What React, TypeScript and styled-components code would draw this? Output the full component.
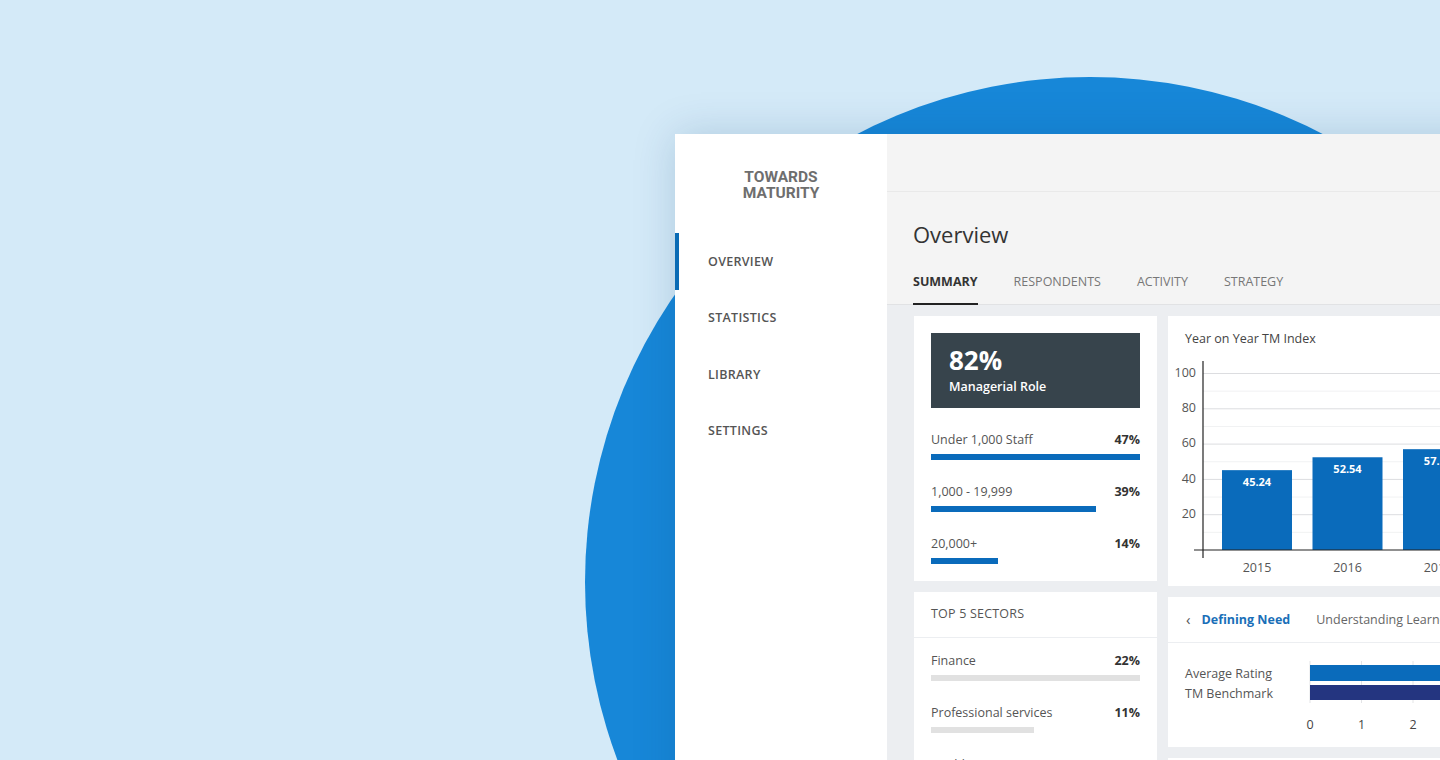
import styled, {createGlobalStyle} from "styled-components";

const GlobalStyle = createGlobalStyle`
    * { box-sizing: border-box; }
    html, body { margin: 0; padding: 0; }
    body {
        font-family: "Open Sans", "Liberation Sans", sans-serif;
        background: #d4eaf8;
    }
`

const blue = "#0a6bbb"
const navy = "#243580"

type BarRow = { label: string, value: string, width: number }

const staffRows: BarRow[] = [
    {label: "Under 1,000 Staff", value: "47%", width: 209},
    {label: "1,000 - 19,999", value: "39%", width: 165},
    {label: "20,000+", value: "14%", width: 67},
]

const sectorRows: BarRow[] = [
    {label: "Finance", value: "22%", width: 209},
    {label: "Professional services", value: "11%", width: 103},
    {label: "Healthcare", value: "9%", width: 86},
]

const navItems = ["OVERVIEW", "STATISTICS", "LIBRARY", "SETTINGS"]
const tabs = ["SUMMARY", "RESPONDENTS", "ACTIVITY", "STRATEGY"]

const years = [
    {year: "2015", value: 45.24},
    {year: "2016", value: 52.54},
    {year: "2017", value: 57.12},
    {year: "2018", value: 61.08},
]

const IndexChart = () => {
    const base = 194
    const k = 1.765
    const y = (v: number) => base - v * k
    return (
        <svg width="420" height="225" viewBox="0 0 420 225">
            {[10, 30, 50, 70, 90].map(v => (
                <line key={v} x1={35} x2={420} y1={y(v)} y2={y(v)} stroke="#f1f2f3" strokeWidth={1}/>
            ))}
            {[20, 40, 60, 80, 100].map(v => (
                <g key={v}>
                    <line x1={35} x2={420} y1={y(v)} y2={y(v)} stroke="#dcdde0" strokeWidth={1}/>
                    <text x={28} y={y(v)} dominantBaseline="middle" textAnchor="end"
                          fontFamily="Open Sans, sans-serif" fontSize="12.5" fill="#555">{v}</text>
                </g>
            ))}
            {years.map((d, i) => {
                const x = 54 + i * 90.5
                return (
                    <g key={d.year}>
                        <rect x={x} y={y(d.value)} width={70} height={d.value * k} fill={blue}/>
                        <text x={x + 35} y={y(d.value) + 13} dominantBaseline="middle" textAnchor="middle"
                              fontFamily="Open Sans, sans-serif" fontSize="11" fontWeight="700" fill="#fff">
                            {d.value.toFixed(2)}
                        </text>
                        <text x={x + 35} y={213} dominantBaseline="middle" textAnchor="middle"
                              fontFamily="Open Sans, sans-serif" fontSize="12.5" fill="#555">{d.year}</text>
                    </g>
                )
            })}
            <line x1={35} x2={35} y1={5} y2={202} stroke="#222" strokeWidth={1.2}/>
            <line x1={26} x2={420} y1={base} y2={base} stroke="#222" strokeWidth={1.2}/>
        </svg>
    )
}

const RatingChart = () => {
    const step = 51.5
    return (
        <RatingSvg width="280" height="80" viewBox="0 0 280 80">
            {[0, 1, 2, 3, 4, 5].map(v => (
                <g key={v}>
                    <line x1={5 + v * step} x2={5 + v * step} y1={4} y2={46} stroke="#e3e4e6" strokeWidth={1}/>
                    <text x={5 + v * step} y={69} dominantBaseline="middle" textAnchor="middle"
                          fontFamily="Open Sans, sans-serif" fontSize="12.5" fill="#444">{v}</text>
                </g>
            ))}
            <rect x={5} y={8} width={3.4 * step} height={16} fill={blue}/>
            <rect x={5} y={28} width={3.1 * step} height={15} fill={navy}/>
        </RatingSvg>
    )
}

export default function App() {
    return (
        <Page>
            <GlobalStyle/>
            <Circle/>
            <Window>
                <Sidebar>
                    <Logo>
                        <LogoLine>TOWARDS</LogoLine>
                        <LogoLine>MATURITY</LogoLine>
                    </Logo>
                    <Nav>
                        {navItems.map((n, i) => (
                            <NavItem key={n} $active={i === 0}>{n}</NavItem>
                        ))}
                    </Nav>
                </Sidebar>
                <Main>
                    <TopBar/>
                    <Title>Overview</Title>
                    <Tabs>
                        {tabs.map((t, i) => <Tab key={t} $active={i === 0}>{t}</Tab>)}
                    </Tabs>
                    <Content>
                        <Column $width={243}>
                            <Card $pad="17px">
                                <Highlight>
                                    <BigNumber>82%</BigNumber>
                                    <HighlightLabel>Managerial Role</HighlightLabel>
                                </Highlight>
                                {staffRows.map(r => (
                                    <StatRow key={r.label}>
                                        <StatHead>
                                            <StatLabel>{r.label}</StatLabel>
                                            <StatValue>{r.value}</StatValue>
                                        </StatHead>
                                        <Bar $color={blue} style={{width: r.width}}/>
                                    </StatRow>
                                ))}
                            </Card>
                            <Card>
                                <CardHeader>TOP 5 SECTORS</CardHeader>
                                <CardBody>
                                    {sectorRows.map(r => (
                                        <StatRow key={r.label} $first>
                                            <StatHead>
                                                <StatLabel>{r.label}</StatLabel>
                                                <StatValue>{r.value}</StatValue>
                                            </StatHead>
                                            <Bar $color="#e1e1e1" style={{width: r.width}}/>
                                        </StatRow>
                                    ))}
                                </CardBody>
                            </Card>
                        </Column>
                        <Column $width={420}>
                            <Card $height={270}>
                                <ChartTitle>Year on Year TM Index</ChartTitle>
                                <ChartWrap>
                                    <IndexChart/>
                                </ChartWrap>
                            </Card>
                            <Card $height={150}>
                                <StepHeader>
                                    <Chevron>‹</Chevron>
                                    <StepActive>Defining Need</StepActive>
                                    <Step>Understanding Learners</Step>
                                </StepHeader>
                                <RatingBody>
                                    <Legend>
                                        <span>Average Rating</span>
                                        <span>TM Benchmark</span>
                                    </Legend>
                                    <RatingChart/>
                                </RatingBody>
                            </Card>
                            <Card $height={150}/>
                        </Column>
                    </Content>
                </Main>
            </Window>
        </Page>
    )
}

const Page = styled.div`
    position: relative;
    width: 1440px;
    height: 760px;
    overflow: hidden;
    background: #d4eaf8;
    padding: 134px 0 0 675px;
`

const Circle = styled.div`
    position: absolute;
    left: 585px;
    top: 77px;
    width: 1010px;
    height: 1010px;
    border-radius: 50%;
    background: #1787d8;
`

const Window = styled.div`
    position: relative;
    display: flex;
    width: 900px;
    height: 700px;
    background: #fff;
    box-shadow: 0 0 40px rgba(10, 60, 110, 0.18);
`

const Sidebar = styled.aside`
    width: 212px;
    flex-shrink: 0;
    background: #fff;
    padding-top: 35px;
`

const Logo = styled.div`
    display: flex;
    flex-direction: column;
    align-items: center;
    margin-bottom: 32px;
`

const LogoLine = styled.span`
    font-family: Roboto, "Liberation Sans", sans-serif;
    font-weight: 700;
    font-size: 15.5px;
    line-height: 16px;
    color: #6e6e6e;
`

const Nav = styled.nav`
    display: flex;
    flex-direction: column;
`

const NavItem = styled.div<{ $active?: boolean }>`
    height: 56.5px;
    display: flex;
    align-items: center;
    padding-left: 29px;
    font-size: 12.5px;
    font-weight: 600;
    letter-spacing: 0.3px;
    color: #555;
    border-left: 4px solid ${p => p.$active ? "#0b6cb5" : "transparent"};
`

const Main = styled.main`
    flex: 1;
    display: flex;
    flex-direction: column;
    background: #f4f4f4;
`

const TopBar = styled.div`
    height: 58px;
    flex-shrink: 0;
    border-bottom: 1px solid #e9e9e9;
`

const Title = styled.h1`
    margin: 27px 0 0 26px;
    font-size: 22px;
    line-height: 30px;
    font-weight: 400;
    color: #333;
`

const Tabs = styled.div`
    display: flex;
    gap: 36px;
    margin-top: 18px;
    padding-left: 26px;
    border-bottom: 1px solid #e1e2e4;
`

const Tab = styled.div<{ $active?: boolean }>`
    font-size: 12.5px;
    line-height: 30px;
    padding-bottom: 6px;
    margin-bottom: -1px;
    font-weight: ${p => p.$active ? 700 : 400};
    color: ${p => p.$active ? "#333" : "#777"};
    border-bottom: 2px solid ${p => p.$active ? "#222" : "transparent"};
`

const Content = styled.div`
    flex: 1;
    display: flex;
    gap: 11px;
    background: #eceef1;
    padding: 11px 0 0 27px;
`

const Column = styled.div<{ $width: number }>`
    width: ${p => p.$width}px;
    flex-shrink: 0;
    display: flex;
    flex-direction: column;
    gap: 11px;
`

const Card = styled.div<{ $pad?: string, $height?: number }>`
    background: #fff;
    padding: ${p => p.$pad || "0"};
    ${p => p.$height ? `height: ${p.$height}px; flex-shrink: 0;` : ""}
`

const Highlight = styled.div`
    background: #37444c;
    color: #fff;
    padding: 12px 18px 13px;
    height: 75px;
`

const BigNumber = styled.div`
    font-size: 26px;
    line-height: 30px;
    font-weight: 700;
    margin-bottom: 3px;
`

const HighlightLabel = styled.div`
    font-size: 12.5px;
    line-height: 18px;
    font-weight: 600;
`

const StatRow = styled.div<{ $first?: boolean }>`
    margin-top: 22px;
    &:not(:first-child) { margin-top: 23px; }
    ${p => p.$first ? "&:first-child { margin-top: 0; }" : ""}
`

const StatHead = styled.div`
    display: flex;
    justify-content: space-between;
    font-size: 12.5px;
    line-height: 18px;
`

const StatLabel = styled.span`
    color: #555;
`

const StatValue = styled.span`
    font-weight: 700;
    color: #333;
`

const Bar = styled.div<{ $color: string }>`
    height: 6px;
    margin-top: 5px;
    background: ${p => p.$color};
`

const CardHeader = styled.div`
    height: 46px;
    padding: 13px 17px 0;
    font-size: 12.5px;
    line-height: 18px;
    letter-spacing: 0.2px;
    color: #555;
    border-bottom: 1px solid #eceef1;
`

const CardBody = styled.div`
    padding: 14px 17px 0;
`

const ChartTitle = styled.div`
    padding: 14px 17px 0;
    font-size: 12.5px;
    line-height: 18px;
    color: #444;
`

const ChartWrap = styled.div`
    margin-top: 8px;
`

const StepHeader = styled.div`
    height: 46px;
    display: flex;
    align-items: center;
    padding-left: 18px;
    font-size: 12.5px;
    border-bottom: 1px solid #eceef1;
    white-space: nowrap;
`

const Chevron = styled.span`
    font-size: 15px;
    color: #555;
    margin-right: 11px;
    margin-top: -2px;
`

const StepActive = styled.span`
    font-weight: 700;
    color: #1a6fb8;
    margin-right: 26px;
`

const Step = styled.span`
    color: #666;
`

const RatingBody = styled.div`
    display: flex;
    padding: 14px 0 0 17px;
`

const Legend = styled.div`
    width: 120px;
    flex-shrink: 0;
    display: flex;
    flex-direction: column;
    padding-top: 7px;
    font-size: 12.5px;
    line-height: 20px;
    color: #555;
`

const RatingSvg = styled.svg`
    flex-shrink: 0;
`
